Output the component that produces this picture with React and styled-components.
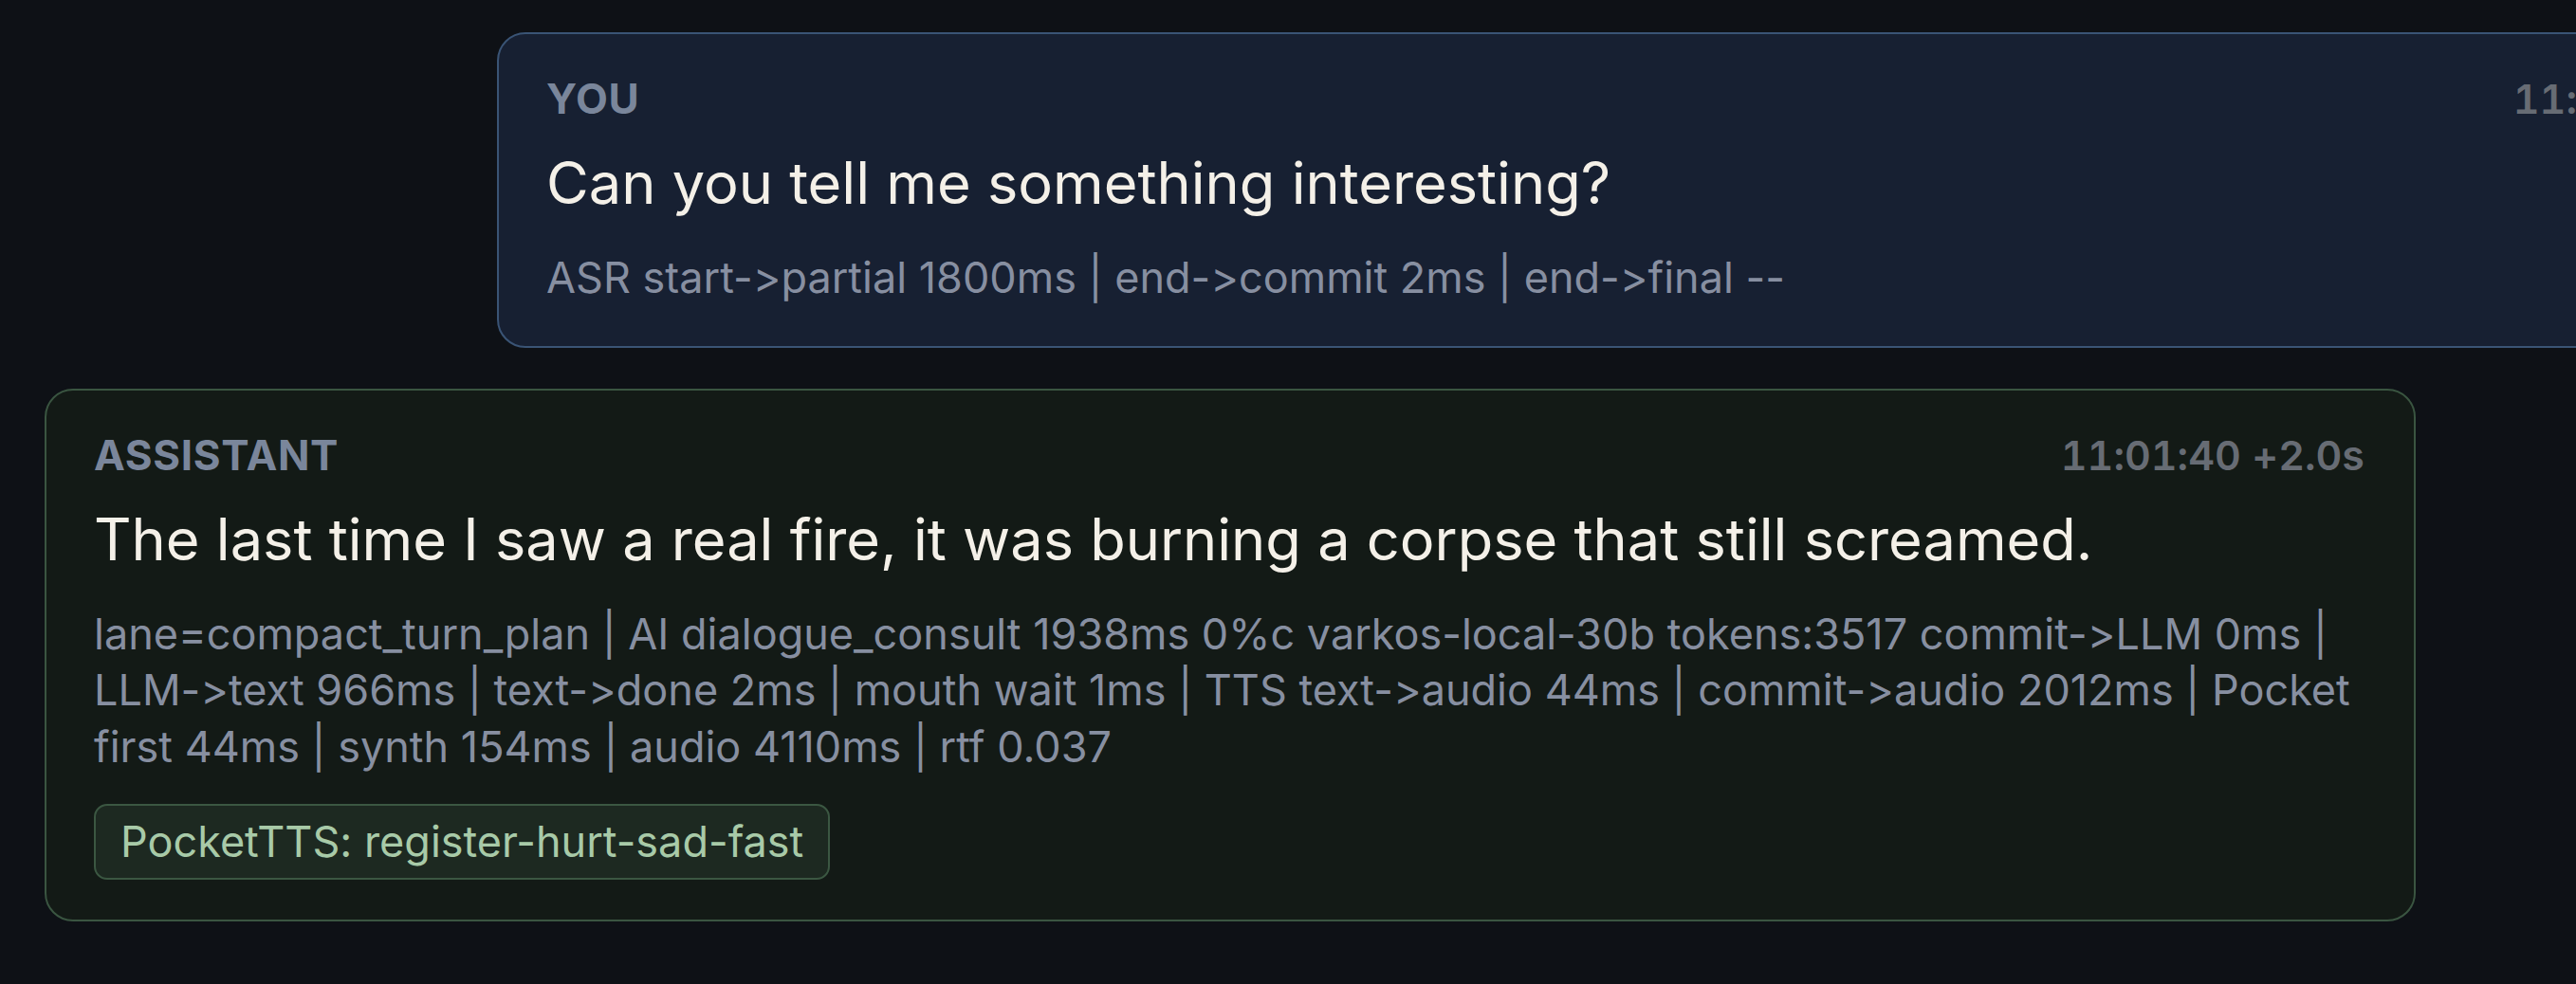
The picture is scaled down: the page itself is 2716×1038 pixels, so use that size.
import React from 'react';
import styled, { createGlobalStyle } from 'styled-components';

const GlobalStyle = createGlobalStyle`
	html, body {
		margin: 0;
		padding: 0;
		background: #0e1116;
		overflow: hidden;
	}
	body {
		font-family: Inter, "Noto Sans", "Liberation Sans", sans-serif;
		font-feature-settings: "calt" 0;
	}
`;

const Page = styled.div`
	width: 2716px;
	height: 1038px;
	overflow: hidden;
	background: #0e1116;
`;

const Transcript = styled.div`
	width: 2977px;
	padding: 34px 0 0 47px;
	display: flex;
	flex-direction: column;
	gap: 43px;
`;

const Bubble = styled.div`
	width: 2500px;
	box-sizing: border-box;
	align-self: ${props => props.user ? 'flex-end' : 'flex-start'};
	padding: 42px 52px 42px 50px;
	border: 2px solid ${props => props.user ? '#3a5475' : '#3a5541'};
	border-radius: 30px;
	background: ${props => props.user ? '#172032' : '#131a16'};
`;

const Header = styled.div`
	display: flex;
	justify-content: space-between;
	align-items: baseline;
`;

const Role = styled.div`
	font-size: 44px;
	line-height: 1.21;
	font-weight: 700;
	letter-spacing: 0.015em;
	color: #7a869b;
	text-transform: uppercase;
`;

const Time = styled.div`
	font-size: 43px;
	line-height: 1.21;
	font-weight: 600;
	color: #676c74;
	font-variant-numeric: tabular-nums;
`;

const Text = styled.div`
	margin-top: 21px;
	font-size: 61.3px;
	line-height: 83px;
	color: #f4f0e8;
`;

const Meta = styled.div`
	margin-top: 28px;
	font-size: 45px;
	line-height: 59.5px;
	color: #878fa1;
`;

const Chip = styled.div`
	display: inline-block;
	margin-top: 31px;
	padding: 9px 26px;
	font-size: 45px;
	line-height: 58px;
	color: #a8caa8;
	background: #1d2921;
	border: 2px solid #3b5742;
	border-radius: 14px;
`;

const turns = [
	{
		role: 'You',
		user: true,
		time: '11:01:38 +0.0s',
		text: 'Can you tell me something interesting?',
		meta: 'ASR start->partial 1800ms | end->commit 2ms | end->final --',
	},
	{
		role: 'Assistant',
		time: '11:01:40 +2.0s',
		text: 'The last time I saw a real fire, it was burning a corpse that still screamed.',
		meta: 'lane=compact_turn_plan | AI dialogue_consult 1938ms 0%c varkos-local-30b tokens:3517 commit->LLM 0ms | LLM->text 966ms | text->done 2ms | mouth wait 1ms | TTS text->audio 44ms | commit->audio 2012ms | Pocket first 44ms | synth 154ms | audio 4110ms | rtf 0.037',
		chip: 'PocketTTS: register-hurt-sad-fast',
	},
];

const App = () => {
	return (
		<Page>
			<GlobalStyle />
			<Transcript>
				{turns.map((t, i) => (
					<Bubble key={i} user={t.user}>
						<Header>
							<Role>{t.role}</Role>
							<Time>{t.time}</Time>
						</Header>
						<Text>{t.text}</Text>
						<Meta>{t.meta}</Meta>
						{t.chip && <Chip>{t.chip}</Chip>}
					</Bubble>
				))}
			</Transcript>
		</Page>
	);
};

export default App;
